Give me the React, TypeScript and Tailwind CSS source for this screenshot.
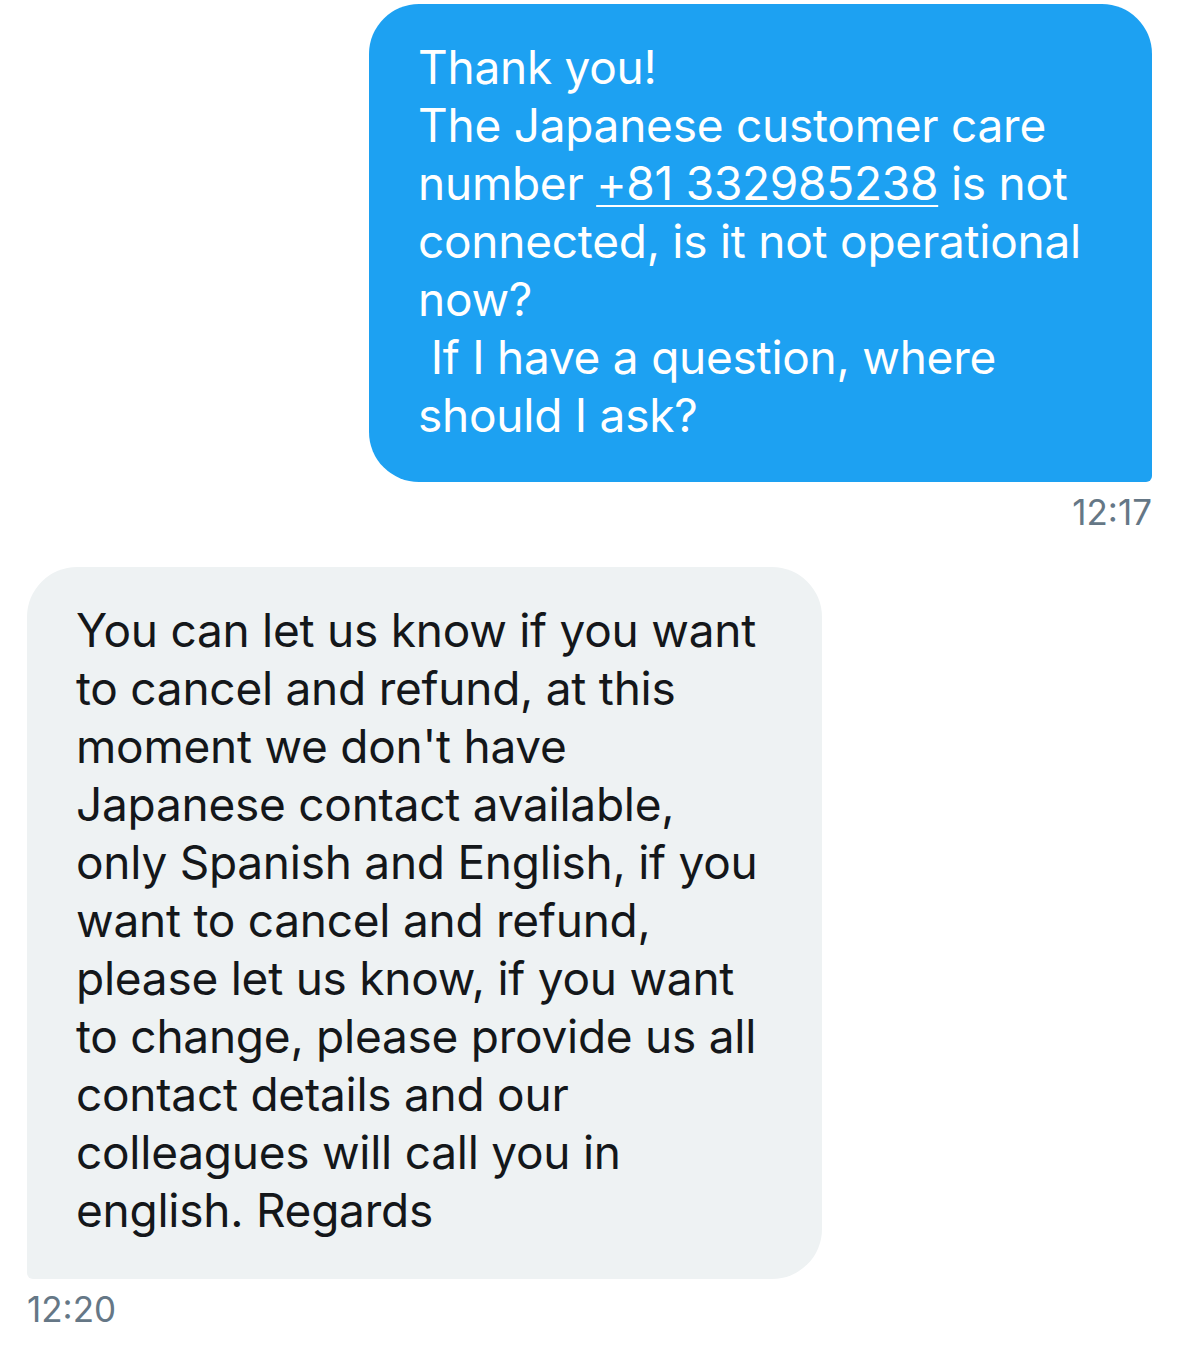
const outgoing = (
  <>
    Thank you!
    <br />
    The Japanese customer care
    <br />
    number{" "}
    <span className="underline decoration-2 underline-offset-[5px]">+81 332985238</span> is not
    <br />
    connected, is it not operational
    <br />
    now?
    <br />
    &nbsp;If I have a question, where
    <br />
    should I ask?
  </>
);

const incomingLines = [
  "You can let us know if you want",
  "to cancel and refund, at this",
  "moment we don't have",
  "Japanese contact available,",
  "only Spanish and English, if you",
  "want to cancel and refund,",
  "please let us know, if you want",
  "to change, please provide us all",
  "contact details and our",
  "colleagues will call you in",
  "english. Regards",
];

export default function App() {
  return (
    <div className="w-[1179px] h-[1362px] bg-white font-['Inter','Noto_Sans',sans-serif] overflow-hidden">
      <div className="flex flex-col pt-[4px] px-[27px]">
        {/* sent */}
        <div className="flex flex-col items-end">
          <div className="ml-auto w-[783px] bg-[#1da1f2] text-white rounded-[50px] rounded-br-[6px] pl-[49px] pr-[20px] pt-[34px] pb-[38px] text-[46px] leading-[58px] tracking-[-0.25px] whitespace-nowrap">
            {outgoing}
          </div>
          <div className="mt-[10px] text-[35px] leading-[40px] text-[#657786]">12:17</div>
        </div>

        {/* received */}
        <div className="flex flex-col items-start mt-[35px]">
          <div className="w-[795px] bg-[#eef2f3] text-[#14171a] rounded-[50px] rounded-bl-[6px] pl-[49px] pr-[20px] pt-[34px] pb-[40px] text-[46px] leading-[58px] tracking-[-0.25px] whitespace-nowrap">
            {incomingLines.map((l) => (
              <div key={l}>{l}</div>
            ))}
          </div>
          <div className="mt-[10px] text-[35px] leading-[40px] text-[#657786]">12:20</div>
        </div>
      </div>
    </div>
  );
}
